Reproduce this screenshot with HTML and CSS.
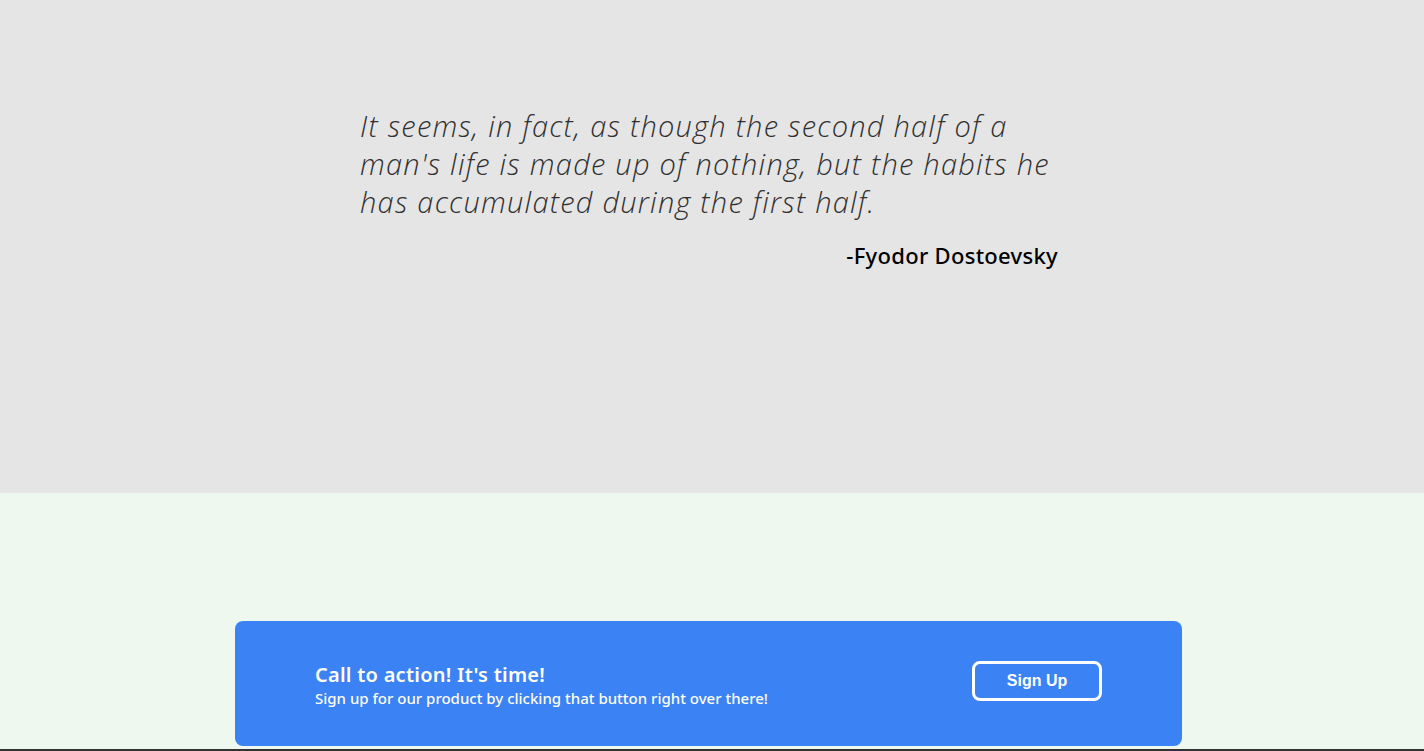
FILE: index.html
```html
<!DOCTYPE html>
<html lang="en">
<head>
<meta charset="utf-8">
<title>Quote</title>
<link rel="stylesheet" href="styles.css">
</head>
<body>
<section class="quote-section">
  <blockquote class="quote">
    <p class="quote-text">It seems, in fact, as though the second half of a man's life is made up of nothing, but the habits he has accumulated during the first half.</p>
    <p class="quote-author">-Fyodor Dostoevsky</p>
  </blockquote>
</section>
<section class="cta-section">
  <div class="cta-card">
    <div class="cta-copy">
      <h2 class="cta-title">Call to action! It's time!</h2>
      <p class="cta-sub">Sign up for our product by clicking that button right over there!</p>
    </div>
    <button class="cta-button">Sign Up</button>
  </div>
</section>
<footer class="footer"></footer>
</body>
</html>
```

FILE: styles.css
```css
html, body {
  margin: 0;
  padding: 0;
}
body {
  font-family: "Open Sans", "Noto Sans", sans-serif;
  background: #333;
}
.quote-section {
  background: #e5e5e5;
  height: 493px;
  box-sizing: border-box;
  padding-top: 107px;
}
.quote {
  width: 700px;
  margin: 0 0 0 360px;
}
.quote-text {
  margin: 0;
  font-family: "Open Sans", sans-serif;
  font-style: italic;
  font-weight: 300;
  font-size: 29px;
  letter-spacing: 1.25px;
  line-height: 38px;
  color: #303030;
}
.quote-author {
  margin: 19px 2px 0 0;
  text-align: right;
  font-family: "Noto Sans", sans-serif;
  font-weight: 500;
  font-size: 22px;
  letter-spacing: 0.3px;
  line-height: 30px;
  color: #000;
}
.cta-section {
  background: #eff8ee;
  height: 256px;
  box-sizing: border-box;
  padding-top: 128px;
}
.cta-card {
  width: 947px;
  height: 125px;
  margin-left: 235px;
  box-sizing: border-box;
  background: #3b82f4;
  border-radius: 8px;
  display: flex;
  align-items: center;
  justify-content: space-between;
  padding: 4px 80px 0 80px;
}
.cta-title {
  margin: 0;
  font-family: "Noto Sans", sans-serif;
  font-weight: 600;
  font-size: 20px;
  letter-spacing: 0.25px;
  line-height: 24px;
  color: #fefdf0;
}
.cta-sub {
  margin: 0;
  font-family: "Noto Sans", sans-serif;
  font-weight: 500;
  font-size: 15px;
  line-height: 22px;
  color: #fefdf0;
}
.cta-button {
  width: 130px;
  height: 40px;
  margin-top: -9px;
  border: 3px solid #fff;
  border-radius: 8px;
  background: transparent;
  color: #fff;
  font-family: "Liberation Sans", Arial, sans-serif;
  font-weight: 700;
  font-size: 16px;
  cursor: pointer;
}
.footer {
  height: 20px;
  background: #333;
}
```
